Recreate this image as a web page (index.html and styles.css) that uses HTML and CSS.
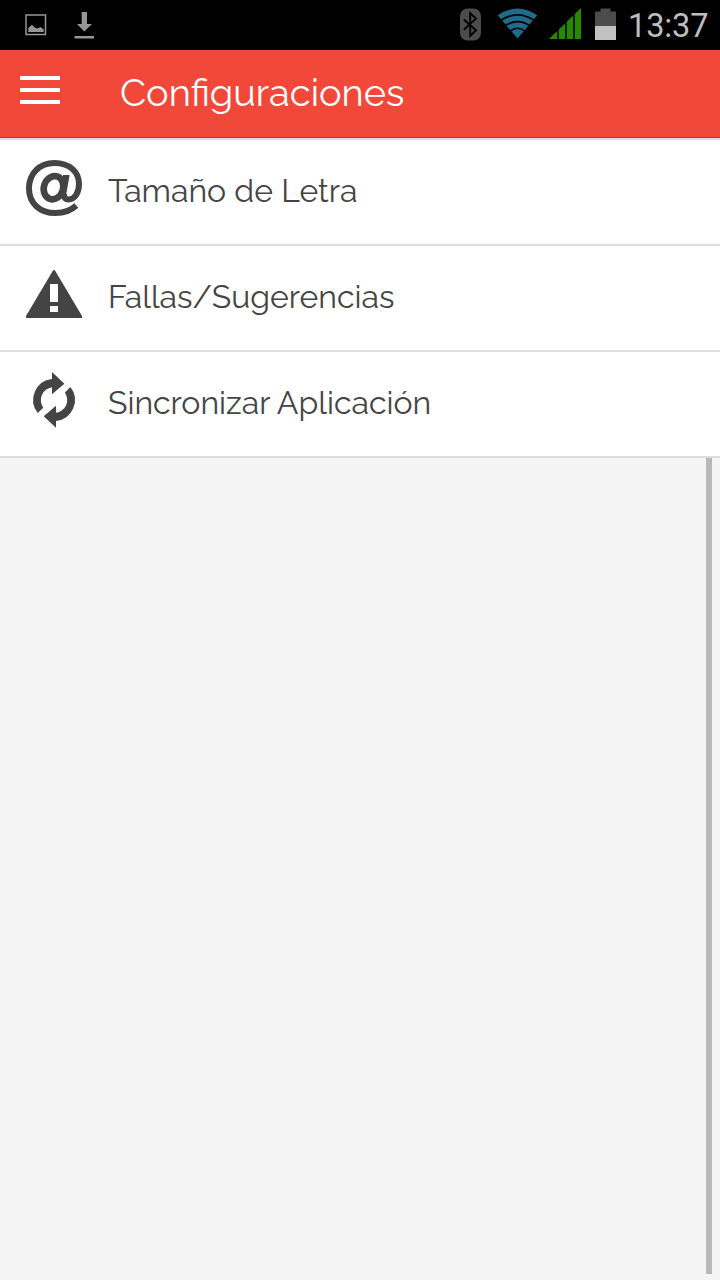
FILE: index.html
```html
<!DOCTYPE html>
<html lang="es">
<head>
<meta charset="utf-8">
<title>Configuraciones</title>
<link rel="stylesheet" href="styles.css">
</head>
<body>
<div class="statusbar">
  <svg class="notifications" width="120" height="50" viewBox="0 0 120 50">
    <rect x="26" y="15" width="19.5" height="19.5" fill="none" stroke="#969696" stroke-width="1.5"/>
    <path d="M28.3 32v-4l3.6-3.3 3.3 3 2 .8 3.3-1.4 3.2 2.4V32z" fill="#969696"/>
    <path d="M81.7 12h5.3v12h5l-7.7 7.5L77 24h4.7zM74.5 36H94v2.4H74.5z" fill="#969696"/>
  </svg>
  <svg class="indicators" width="170" height="50" viewBox="450 0 170 50">
    <rect x="460" y="8.5" width="21" height="32" rx="7.5" fill="#4c4c4c"/>
    <path d="M463.8 19.5L476 30.3 470.2 36V13.2l5.800 5.400-12.200 11.200" fill="none" stroke="#000" stroke-width="1.9"/>
    <path d="M497.8 15.2Q517.5 2 537.2 15.2L517.5 38.5z" fill="#1e6c8c"/>
    <path d="M501 20.3Q517.5 9.5 534 20.3M505 25.8Q517.5 17.3 530 25.8M510 31.2Q517.5 25.3 525 31.2" fill="none" stroke="#000" stroke-width="1.7"/>
    <path d="M549 39L581 8V39z" fill="#268a00"/>
    <path d="M558 20V40M566 15V40M574 8V40" stroke="#000" stroke-width="1.6"/>
    <path d="M595 11.5h5.500v-3h10v3h5.500V26H595z" fill="#4c4c4c"/>
    <path d="M595 26h21v14h-21z" fill="#c2c2c2"/>
  </svg>
  <span class="clock">13:37</span>
</div>
<header class="appbar">
  <div class="menu"><i></i><i></i><i></i></div>
  <h1 class="title">Configuraciones</h1>
</header>
<ul class="settings">
  <li class="item">
    <svg class="icon" width="56" height="56" viewBox="26 160 56 56">
      <g fill="none" stroke="#444">
        <path stroke-width="6" d="M76.300 205.500C70.500 211 63.500 213 55.500 213C39.500 213 29 203 29 188.500C29 173.500 39.500 163 54.500 163C69 163 79 171.500 79 184C79 193 74.500 199.500 68.500 199.500C65 199.500 63.500 197 64.200 193.500"/>
        <ellipse stroke-width="6.600" cx="53.500" cy="187.700" rx="9.600" ry="11.800" transform="rotate(18 53.500 187.700)"/>
      </g>
      <path d="M63 175h6.600L66.200 194.500 60.800 195z" fill="#444"/>
    </svg>
    <span class="label">Tamaño de Letra</span>
  </li>
  <li class="item">
    <svg class="icon" width="56" height="56" viewBox="26 266 56 56">
      <path d="M52.400 271.500Q54 268.700 55.600 271.500L81.700 315.500Q83 318 80.500 318H27.500Q25 318 26.300 315.500z" fill="#444"/>
      <path d="M50 284h8v18h-8zM50 306h8v6h-8z" fill="#fff"/>
    </svg>
    <span class="label">Fallas/Sugerencias</span>
  </li>
  <li class="item">
    <svg class="icon" width="56" height="58" viewBox="26 371 56 58">
      <path fill="#444" d="M52 372L64.400 383.700 52 394.300V387.200A13 13 0 0 0 43.300 407.700L37.700 413A21 21 0 0 1 52 379.100zM56 427.800L43.700 416.200 56 405.700V412.800A13 13 0 0 0 64.900 392.500L70.400 387A21 21 0 0 1 56 420.900z"/>
    </svg>
    <span class="label">Sincronizar Aplicación</span>
  </li>
</ul>
<main class="content"><div class="scrollbar"></div></main>
</body>
</html>
```

FILE: styles.css
```css
* { box-sizing: border-box; }
body {
  margin: 0;
  height: 1280px;
  display: flex;
  flex-direction: column;
  overflow: hidden;
  background: #f4f4f4;
  color: #444;
  font-family: Raleway, Lato, sans-serif;
}
svg { display: block; flex: none; }
.statusbar {
  height: 50px;
  flex: none;
  display: flex;
  align-items: center;
  background: #000;
}
.indicators { margin-left: auto; }
.clock {
  width: 100px;
  padding: 2px 0 0 8px;
  color: #bebebe;
  font: 400 32.5px/48px Roboto, sans-serif;
  letter-spacing: -0.1px;
  white-space: nowrap;
}
.appbar {
  height: 88px;
  flex: none;
  display: flex;
  padding-left: 20px;
  background: #f2483a;
  border-bottom: 1px solid #e42012;
}
.menu {
  width: 100px;
  padding-top: 26px;
  display: flex;
  flex-direction: column;
  gap: 8px;
}
.menu i { width: 40px; height: 4px; background: #fff; }
.title {
  margin: 0;
  color: #fff;
  font-size: 38px;
  font-weight: 400;
  line-height: 86px;
}
.settings {
  margin: 0;
  padding: 0;
  flex: none;
  list-style: none;
  background: #fff;
  border-top: 2px solid #ddd;
}
.item {
  height: 106px;
  display: flex;
  align-items: center;
  gap: 26px;
  padding: 0 26px 8px;
  border-bottom: 2px solid #ddd;
}
.label {
  font-size: 32px;
  font-weight: 400;
  line-height: 40px;
  padding-top: 6px;
  white-space: nowrap;
}
.content {
  flex: 1;
  display: flex;
  justify-content: flex-end;
  padding: 0 8px 6px 0;
}
.scrollbar { width: 6px; background: #b8b8b8; }
```
